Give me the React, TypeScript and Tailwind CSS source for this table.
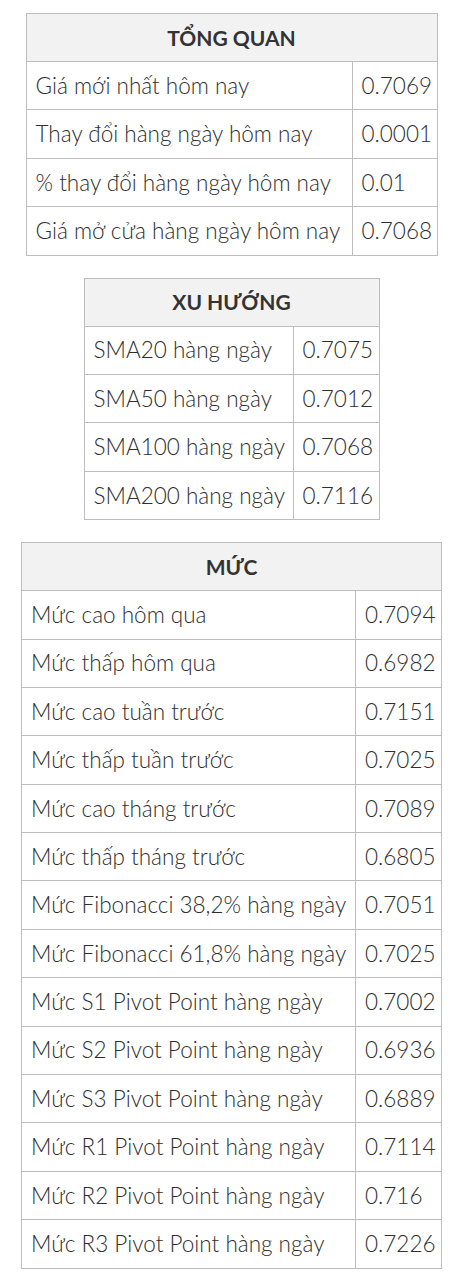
type Row = [string, string];

const overview: Row[] = [
  ["Giá mới nhất hôm nay", "0.7069"],
  ["Thay đổi hàng ngày hôm nay", "0.0001"],
  ["% thay đổi hàng ngày hôm nay", "0.01"],
  ["Giá mở cửa hàng ngày hôm nay", "0.7068"],
];

const trend: Row[] = [
  ["SMA20 hàng ngày", "0.7075"],
  ["SMA50 hàng ngày", "0.7012"],
  ["SMA100 hàng ngày", "0.7068"],
  ["SMA200 hàng ngày", "0.7116"],
];

const levels: Row[] = [
  ["Mức cao hôm qua", "0.7094"],
  ["Mức thấp hôm qua", "0.6982"],
  ["Mức cao tuần trước", "0.7151"],
  ["Mức thấp tuần trước", "0.7025"],
  ["Mức cao tháng trước", "0.7089"],
  ["Mức thấp tháng trước", "0.6805"],
  ["Mức Fibonacci 38,2% hàng ngày", "0.7051"],
  ["Mức Fibonacci 61,8% hàng ngày", "0.7025"],
  ["Mức S1 Pivot Point hàng ngày", "0.7002"],
  ["Mức S2 Pivot Point hàng ngày", "0.6936"],
  ["Mức S3 Pivot Point hàng ngày", "0.6889"],
  ["Mức R1 Pivot Point hàng ngày", "0.7114"],
  ["Mức R2 Pivot Point hàng ngày", "0.716"],
  ["Mức R3 Pivot Point hàng ngày", "0.7226"],
];

function DataTable({
  title,
  rows,
  width,
  firstCol,
}: {
  title: string;
  rows: Row[];
  width: string;
  firstCol: string;
}) {
  return (
    <table className={`mx-auto table-fixed border-collapse border border-[#bdbdbd] ${width}`}>
      <colgroup>
        <col className={firstCol} />
        <col />
      </colgroup>
      <thead>
        <tr>
          <th
            colSpan={2}
            className="h-[48px] border border-[#bdbdbd] bg-[#f2f2f2] text-center text-[21px] font-bold text-[#333]"
          >
            {title}
          </th>
        </tr>
      </thead>
      <tbody>
        {rows.map(([label, value]) => (
          <tr key={label} className="h-[48.4px]">
            <td className="border border-[#bdbdbd] pl-[9px] text-[22.5px] font-light text-[#2e2e2e] whitespace-nowrap">
              {label}
            </td>
            <td className="border border-[#bdbdbd] pl-[9px] text-[22.5px] font-light text-[#2e2e2e]">{value}</td>
          </tr>
        ))}
      </tbody>
    </table>
  );
}

export default function App() {
  return (
    <div className="flex flex-col gap-[22px] bg-white pt-[13px] pb-4 font-['Lato',sans-serif]">
      <DataTable title="TỔNG QUAN" rows={overview} width="w-[412px]" firstCol="w-[326px]" />
      <DataTable title="XU HƯỚNG" rows={trend} width="w-[296px]" firstCol="w-[209px]" />
      <DataTable title="MỨC" rows={levels} width="w-[421px]" firstCol="w-[334px]" />
    </div>
  );
}
